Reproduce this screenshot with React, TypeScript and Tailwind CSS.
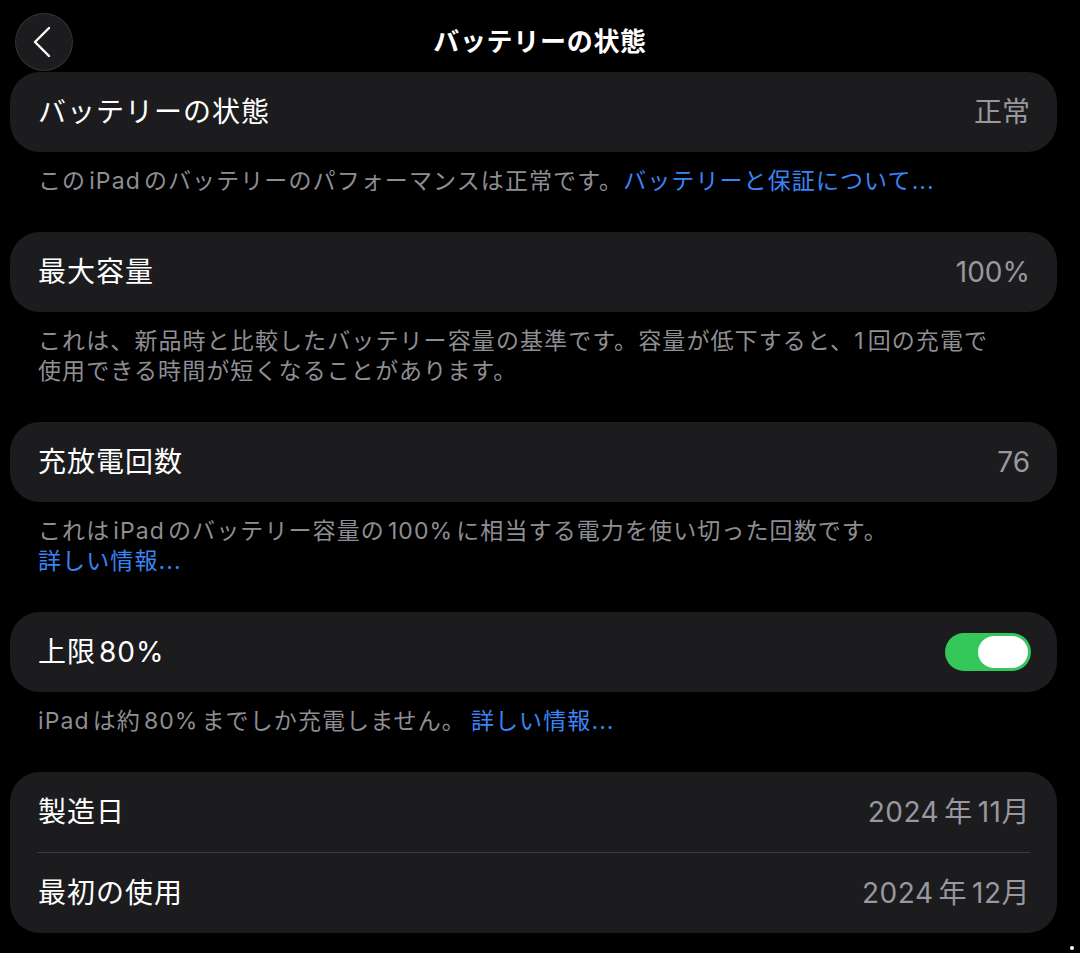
const font = {
  fontFamily: '"Inter", "Noto Sans CJK JP", sans-serif',
};

function Lat({ children }: { children: React.ReactNode }) {
  return <span className="mx-[3px]">{children}</span>;
}

function Row({
  label,
  value,
  children,
}: {
  label: React.ReactNode;
  value?: React.ReactNode;
  children?: React.ReactNode;
}) {
  return (
    <div className="flex h-[80px] items-center justify-between pl-[28px] pr-[27px]">
      <span className="text-[28px] tracking-[1px] text-white">{label}</span>
      {value && <span className="text-[28px] text-[#98989e]">{value}</span>}
      {children}
    </div>
  );
}

function Card({ children }: { children: React.ReactNode }) {
  return (
    <div className="ml-[10px] mr-[23px] rounded-[30px] bg-[#1c1c1e]">{children}</div>
  );
}

function Footer({ children }: { children: React.ReactNode }) {
  return (
    <div className="px-[38px] pt-[14px] pb-[36px] text-[23px] leading-[30px] tracking-[1.1px] text-[#8e8e93]">
      {children}
    </div>
  );
}

function Toggle() {
  return (
    <div className="mr-[-1px] flex h-[38px] w-[86px] items-center justify-end rounded-full bg-[#34c759] pr-[3px]">
      <div className="h-[32px] w-[50px] rounded-full bg-white" />
    </div>
  );
}

export default function App() {
  return (
    <div
      style={font}
      className="relative h-[953px] w-[1080px] overflow-hidden bg-black"
    >
      {/* Header */}
      <div className="grid h-[72px] grid-cols-[1fr_auto_1fr] items-start pt-[13px]">
        <div className="pl-[15px]">
          <button className="flex h-[58px] w-[58px] items-center justify-center rounded-full border border-white/10 bg-[#1c1c1e]">
            <svg width="20" height="32" viewBox="0 0 20 32" fill="none" className="mr-[4px]">
              <path
                d="M17 2 L3 16 L17 30"
                stroke="white"
                strokeWidth="2.4"
                strokeLinecap="round"
                strokeLinejoin="round"
              />
            </svg>
          </button>
        </div>
        <h1 className="pt-[12px] text-[26px] font-bold leading-[34px] tracking-[0.7px] text-white">
          バッテリーの状態
        </h1>
        <div />
      </div>

      <Card>
        <Row label="バッテリーの状態" value="正常" />
      </Card>
      <Footer>
        この<Lat>iPad</Lat>のバッテリーのパフォーマンスは正常です。
        <span className="text-[#3b84f5]">バッテリーと保証について...</span>
      </Footer>

      <Card>
        <Row label="最大容量" value="100%" />
      </Card>
      <Footer>
        これは、新品時と比較したバッテリー容量の基準です。容量が低下すると、<span className="mr-[3px]">1</span>回の充電で
        <br />
        使用できる時間が短くなることがあります。
      </Footer>

      <Card>
        <Row label="充放電回数" value="76" />
      </Card>
      <Footer>
        これは<Lat>iPad</Lat>のバッテリー容量の<Lat>100%</Lat>に相当する電力を使い切った回数です。
        <br />
        <span className="text-[#3b84f5]">詳しい情報...</span>
      </Footer>

      <Card>
        <Row label={<>上限<span className="ml-[3px]">80%</span></>}>
          <Toggle />
        </Row>
      </Card>
      <Footer>
        <span className="mr-[3px]">iPad</span>は約<Lat>80%</Lat>までしか充電しません。
        <span className="ml-[5px] text-[#3b84f5]">詳しい情報...</span>
      </Footer>

      <Card>
        <Row label="製造日" value={<span className="tracking-[0.5px]">2024<span className="mx-[5px]">年</span>11月</span>} />
        <div className="ml-[27px] mr-[27px] h-px bg-[#3a3a3c]" />
        <Row label="最初の使用" value={<span className="tracking-[0.5px]">2024<span className="mx-[5px]">年</span>12月</span>} />
      </Card>

      <div className="absolute bottom-[3px] right-[6px] h-[4px] w-[4px] rounded-full bg-white" />
    </div>
  );
}
